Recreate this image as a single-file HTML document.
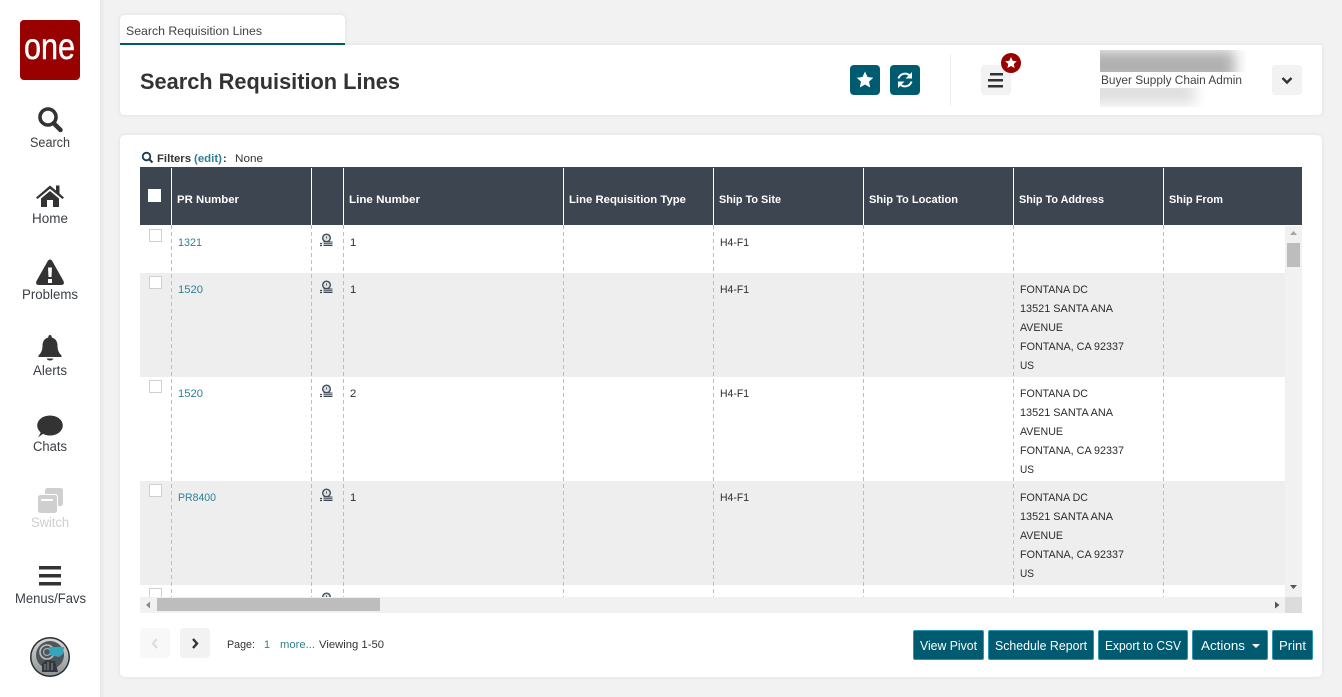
<!DOCTYPE html>
<html><head><meta charset="utf-8"><title>Search Requisition Lines</title>
<style>
html,body{margin:0;padding:0;width:1342px;height:697px;overflow:hidden;background:#f2f2f2}
svg{display:block}
text{font-family:"Liberation Sans",sans-serif;font-size:11px;fill:#333}
.n{font-size:13.5px;fill:#3a3f45;text-anchor:start}
.h{font-size:11px;font-weight:bold;fill:#fff}
.c{font-size:11.3px;fill:#2c2c2c}
.l{font-size:11.3px;fill:#2f7f94}
.b{font-size:12.8px;fill:#fff}
</style></head><body>
<svg width="1342" height="697" viewBox="0 0 1342 697" xmlns="http://www.w3.org/2000/svg">
<defs>
<linearGradient id="sg" x1="0" x2="1" y1="0" y2="0"><stop offset="0" stop-color="#e6e6e6"/><stop offset="1" stop-color="#f2f2f2"/></linearGradient>
<linearGradient id="av" x1="0" x2="0" y1="0" y2="1"><stop offset="0" stop-color="#d4d7d8"/><stop offset="1" stop-color="#8f9496"/></linearGradient>
<filter id="sh" x="-2%" y="-10%" width="104%" height="120%"><feDropShadow dx="0" dy="0" stdDeviation="2" flood-color="#000" flood-opacity=".09"/></filter>
<filter id="bl" x="-30%" y="-100%" width="160%" height="300%"><feGaussianBlur stdDeviation="7"/></filter>
<clipPath id="blur1"><rect x="1100" y="50" width="146" height="22"/></clipPath>
<clipPath id="blur2"><rect x="1100" y="88" width="146" height="19"/></clipPath>
<clipPath id="grid"><rect x="140" y="225" width="1162" height="372"/></clipPath>
<g id="ic"><circle cx="6.500" cy="5" r="3.800" fill="#dfe3e6" stroke="#4a5560" stroke-width="1.500"/><path d="M6.500 3.500V5.500" stroke="#4a5560"/><path d="M3.500 9h9M3.500 10.800h9M3.500 12.500h9" stroke="#3c4550" stroke-width="1.100"/><path d="M0 10.500h2M0 12.500h2" stroke="#3c4550" stroke-width="1.300"/></g>
</defs>

<rect width="1342" height="697" fill="#f2f2f2"/>
<rect x="100" width="5" height="697" fill="url(#sg)"/>
<rect width="100" height="697" fill="#fff"/>

<!-- logo -->
<rect x="20" y="20" width="60" height="60" rx="4" fill="#990000"/>
<text x="24" y="59" textLength="51" lengthAdjust="spacingAndGlyphs" style="font-size:37px;fill:#fff;stroke:#fff;stroke-width:.5">one</text>

<!-- Search -->
<circle cx="48" cy="117" r="8" fill="none" stroke="#333" stroke-width="3.600"/>
<path d="M54 123.500L60.500 130" stroke="#333" stroke-width="4.500" stroke-linecap="round"/>
<text class="n" x="30" y="147" textLength="40" lengthAdjust="spacingAndGlyphs">Search</text>

<!-- Home -->
<path d="M36 197.500L50 185.500L56 190.500V185.500H59.500V193.500L64 197.500L62.500 199L50 188.800L37.500 199Z" fill="#333"/>
<path d="M41 198.500L50 191L59 198.500V207H53V200H47V207H41Z" fill="#333"/>
<text class="n" x="32" y="223" textLength="36" lengthAdjust="spacingAndGlyphs">Home</text>

<!-- Problems -->
<path d="M50 259.500Q51.500 259.500 52.500 261.500L63.500 281Q65 285 61 285H39Q35 285 36.500 281L47.500 261.500Q48.500 259.500 50 259.500Z" fill="#333"/>
<path d="M48 267.500H52L51.500 277H48.500ZM48 279H52V283H48Z" fill="#fff"/>
<text class="n" x="22" y="299" textLength="56" lengthAdjust="spacingAndGlyphs">Problems</text>

<!-- Alerts -->
<path d="M50 335Q51.700 335 51.700 337.500Q57.500 339 57.500 346Q57.500 352 61.500 355.500V357H38.500V355.500Q42.500 352 42.500 346Q42.500 339 48.300 337.500Q48.300 335 50 335Z" fill="#333"/>
<path d="M46.500 358.500H53.500Q52.500 360.500 50 360.500Q47.500 360.500 46.500 358.500Z" fill="#333"/>
<text class="n" x="33" y="375" textLength="34" lengthAdjust="spacingAndGlyphs">Alerts</text>

<!-- Chats -->
<ellipse cx="50" cy="425.500" rx="12.800" ry="10" fill="#333"/>
<path d="M44 433L38 437.500Q41 433 41 430Z" fill="#333"/>
<text class="n" x="33" y="451" textLength="34" lengthAdjust="spacingAndGlyphs">Chats</text>

<!-- Switch -->
<rect x="45" y="488" width="18" height="18" rx="2.500" fill="#cfcfcf"/>
<rect x="37" y="494" width="21" height="20" rx="3" fill="#fff"/>
<rect x="38" y="495" width="19" height="18" rx="2.500" fill="#cfcfcf"/>
<rect x="41" y="499" width="12" height="2" fill="#fff"/>
<text class="n" x="31" y="527" textLength="38" lengthAdjust="spacingAndGlyphs" style="fill:#cfcfcf">Switch</text>

<!-- Menus -->
<path d="M39 566h22v3.500h-22zM39 574h22v3.500h-22zM39 582h22v3.500h-22z" fill="#333"/>
<text class="n" x="15" y="603" textLength="71" lengthAdjust="spacingAndGlyphs">Menus/Favs</text>

<!-- Avatar -->
<circle cx="50" cy="657" r="20" fill="#2a2d30"/>
<circle cx="50" cy="657" r="18.500" fill="url(#av)"/>
<circle cx="50" cy="655" r="14" fill="#4f555a"/>
<path d="M42 672V664L46 660L55 661L58 672Z" fill="#33383c"/>
<path d="M45 670V664M48 670V662M52 670V663" stroke="#8f9496"/>
<circle cx="47" cy="652" r="7" fill="none" stroke="#b9bec0" stroke-width="1.600"/>
<circle cx="47" cy="652" r="3.500" fill="none" stroke="#a5abad" stroke-width="1.200"/>
<path d="M49 647H64L63 654L59 657L50 655Z" fill="#35a5bb"/>

<!-- tab -->
<g filter="url(#sh)">
<path d="M120 45V20Q120 15 125 15H340Q345 15 345 20V45Z" fill="#fff"/>
<path d="M120 115V45H1322V110Q1322 115 1317 115H125Q120 115 120 110Z" fill="#fff"/>
</g>
<rect x="120" y="43" width="225" height="2" fill="#005a70"/>
<text x="126" y="35" textLength="136" lengthAdjust="spacingAndGlyphs" style="font-size:12.300px;fill:#3f444a">Search Requisition Lines</text>
<text x="140" y="89" textLength="260" lengthAdjust="spacingAndGlyphs" style="font-size:22.500px;font-weight:bold;fill:#333">Search Requisition Lines</text>

<!-- header actions -->
<rect x="850" y="65" width="30" height="30" rx="4" fill="#005a70"/>
<path d="M865 71.500L867.500 77L873.300 77.700L869 81.600L870.200 87.500L865 84.500L859.800 87.500L861 81.600L856.700 77.700L862.500 77Z" fill="#fff"/>
<rect x="890" y="65" width="30" height="30" rx="4" fill="#005a70"/>
<path d="M898.500 78.500A6.800 6.800 0 0 1 910 75.800M911.500 81.500A6.800 6.800 0 0 1 900 84.200" fill="none" stroke="#fff" stroke-width="2"/>
<path d="M912 72V78.500H905.500ZM898 88V81.500H904.500Z" fill="#fff"/>
<rect x="950" y="55" width="1" height="50" fill="#ececec"/>
<rect x="981" y="65" width="30" height="30" rx="4" fill="#f2f2f2"/>
<path d="M990 73h13v2.500h-13zM988 79h15v2.500h-15zM988 85h15v2.500h-15z" fill="#333"/>
<circle cx="1011" cy="63" r="10" fill="#990000"/>
<path d="M1011 57L1012.700 60.800L1016.800 61.300L1013.800 64L1014.600 68L1011 66L1007.400 68L1008.200 64L1005.200 61.300L1009.300 60.800Z" fill="#fff"/>

<!-- blurred name -->
<g clip-path="url(#blur1)"><rect x="1085" y="50" width="150" height="32" fill="#b0b0b0" filter="url(#bl)"/></g>
<g clip-path="url(#blur2)"><rect x="1085" y="80" width="110" height="24" fill="#dedede" filter="url(#bl)"/></g>
<text x="1101" y="84" textLength="141" lengthAdjust="spacingAndGlyphs" style="font-size:12.300px;fill:#3f444a">Buyer Supply Chain Admin</text>
<rect x="1272" y="65" width="30" height="30" rx="4" fill="#f2f2f2"/>
<path d="M1282.500 78L1287 82.500L1291.500 78" fill="none" stroke="#333" stroke-width="2.400"/>

<!-- main card -->
<rect x="120" y="135" width="1202" height="542" rx="5" fill="#fff" filter="url(#sh)"/>

<!-- filters -->
<circle cx="146.500" cy="156.500" r="3.800" fill="none" stroke="#1f3a4d" stroke-width="1.800"/>
<path d="M149.500 159.500L152.500 162.500" stroke="#1f3a4d" stroke-width="2"/>
<text x="157" y="162" textLength="34" lengthAdjust="spacingAndGlyphs" style="font-weight:bold;fill:#333">Filters</text>
<text x="194" y="162" textLength="28" lengthAdjust="spacingAndGlyphs" style="font-weight:bold;fill:#2f7f94">(edit)</text>
<text x="223" y="162" style="font-weight:bold;fill:#333">:</text>
<text x="235" y="162" textLength="28" lengthAdjust="spacingAndGlyphs" style="fill:#333">None</text>

<!-- table head -->
<rect x="140" y="167" width="1162" height="58" fill="#3c4550"/>
<path d="M171.500 168V225M311.500 168V225M343.500 168V225M563.500 168V225M713.500 168V225M863.500 168V225M1013.500 168V225M1163.500 168V225" stroke="#fff"/>
<rect x="148" y="189" width="13" height="13" fill="#fff"/>
<text class="h" x="177" y="203" textLength="62" lengthAdjust="spacingAndGlyphs">PR Number</text>
<text class="h" x="349" y="203" textLength="71" lengthAdjust="spacingAndGlyphs">Line Number</text>
<text class="h" x="569" y="203" textLength="117" lengthAdjust="spacingAndGlyphs">Line Requisition Type</text>
<text class="h" x="719" y="203" textLength="62" lengthAdjust="spacingAndGlyphs">Ship To Site</text>
<text class="h" x="869" y="203" textLength="89" lengthAdjust="spacingAndGlyphs">Ship To Location</text>
<text class="h" x="1019" y="203" textLength="85" lengthAdjust="spacingAndGlyphs">Ship To Address</text>
<text class="h" x="1169" y="203" textLength="54" lengthAdjust="spacingAndGlyphs">Ship From</text>

<!-- rows -->
<rect x="140" y="273" width="1146" height="104" fill="#eeeeee"/>
<rect x="140" y="481" width="1146" height="104" fill="#eeeeee"/>
<path d="M171.500 225V597M311.500 225V597M343.500 225V597M563.500 225V597M713.500 225V597M863.500 225V597M1013.500 225V597M1163.500 225V597" stroke="#bdbdbd" stroke-dasharray="4 3"/>
<g fill="#fff" stroke="#d0d0d0">
<rect x="149.500" y="229.500" width="12" height="12"/>
<rect x="149.500" y="276.500" width="12" height="12"/>
<rect x="149.500" y="380.500" width="12" height="12"/>
<rect x="149.500" y="484.500" width="12" height="12"/>
<rect x="149.500" y="588.500" width="12" height="12"/>
</g>
<g clip-path="url(#grid)">
<use href="#ic" x="320" y="233"/><use href="#ic" x="320" y="280"/><use href="#ic" x="320" y="384"/><use href="#ic" x="320" y="488"/><use href="#ic" x="320" y="592"/>
</g>

<text class="l" x="178" y="246" textLength="24" lengthAdjust="spacingAndGlyphs">1321</text>
<text class="c" x="350" y="246">1</text>
<text class="c" x="720" y="246" textLength="29" lengthAdjust="spacingAndGlyphs">H4-F1</text>

<text class="l" x="178" y="293" textLength="25" lengthAdjust="spacingAndGlyphs">1520</text>
<text class="c" x="350" y="293">1</text>
<text class="c" x="720" y="293" textLength="29" lengthAdjust="spacingAndGlyphs">H4-F1</text>
<text class="c" x="1020" y="293" textLength="68" lengthAdjust="spacingAndGlyphs">FONTANA DC</text>
<text class="c" x="1020" y="312" textLength="93" lengthAdjust="spacingAndGlyphs">13521 SANTA ANA</text>
<text class="c" x="1020" y="331" textLength="43" lengthAdjust="spacingAndGlyphs">AVENUE</text>
<text class="c" x="1020" y="350" textLength="104" lengthAdjust="spacingAndGlyphs">FONTANA, CA 92337</text>
<text class="c" x="1020" y="369" textLength="14" lengthAdjust="spacingAndGlyphs">US</text>

<text class="l" x="178" y="397" textLength="25" lengthAdjust="spacingAndGlyphs">1520</text>
<text class="c" x="350" y="397">2</text>
<text class="c" x="720" y="397" textLength="29" lengthAdjust="spacingAndGlyphs">H4-F1</text>
<text class="c" x="1020" y="397" textLength="68" lengthAdjust="spacingAndGlyphs">FONTANA DC</text>
<text class="c" x="1020" y="416" textLength="93" lengthAdjust="spacingAndGlyphs">13521 SANTA ANA</text>
<text class="c" x="1020" y="435" textLength="43" lengthAdjust="spacingAndGlyphs">AVENUE</text>
<text class="c" x="1020" y="454" textLength="104" lengthAdjust="spacingAndGlyphs">FONTANA, CA 92337</text>
<text class="c" x="1020" y="473" textLength="14" lengthAdjust="spacingAndGlyphs">US</text>

<text class="l" x="178" y="501" textLength="38" lengthAdjust="spacingAndGlyphs">PR8400</text>
<text class="c" x="350" y="501">1</text>
<text class="c" x="720" y="501" textLength="29" lengthAdjust="spacingAndGlyphs">H4-F1</text>
<text class="c" x="1020" y="501" textLength="68" lengthAdjust="spacingAndGlyphs">FONTANA DC</text>
<text class="c" x="1020" y="520" textLength="93" lengthAdjust="spacingAndGlyphs">13521 SANTA ANA</text>
<text class="c" x="1020" y="539" textLength="43" lengthAdjust="spacingAndGlyphs">AVENUE</text>
<text class="c" x="1020" y="558" textLength="104" lengthAdjust="spacingAndGlyphs">FONTANA, CA 92337</text>
<text class="c" x="1020" y="577" textLength="14" lengthAdjust="spacingAndGlyphs">US</text>

<!-- scrollbars -->
<rect x="1285" y="226" width="17" height="371" fill="#f1f1f1"/>
<rect x="1287" y="243" width="13" height="24" fill="#bdbdbd"/>
<path d="M1293.500 231L1297 235H1290Z" fill="#a3a3a3"/>
<path d="M1290 585H1297L1293.500 589Z" fill="#555"/>
<rect x="140" y="597" width="1146" height="16" fill="#f1f1f1"/>
<rect x="157" y="598" width="223" height="13" fill="#bdbdbd"/>
<path d="M150 601.500V608.500L146 605Z" fill="#8a8a8a"/>
<path d="M1275 601.500V608.500L1279.500 605Z" fill="#555"/>
<rect x="1285" y="597" width="17" height="16" fill="#dcdcdc"/>

<!-- pagination -->
<rect x="140" y="628" width="30" height="30" rx="4" fill="#f8f8f8"/>
<path d="M157 639L153 643.500L157 648" fill="none" stroke="#dddddd" stroke-width="2.400"/>
<rect x="180" y="628" width="30" height="30" rx="4" fill="#f2f2f2"/>
<path d="M193 639L197 643.500L193 648" fill="none" stroke="#333" stroke-width="2.400"/>
<text x="227" y="648" textLength="28" lengthAdjust="spacingAndGlyphs" style="fill:#333">Page:</text>
<text x="264" y="648" textLength="6" lengthAdjust="spacingAndGlyphs" style="fill:#2f7f94">1</text>
<text x="280" y="648" textLength="35" lengthAdjust="spacingAndGlyphs" style="fill:#2f7f94">more...</text>
<text x="319" y="648" textLength="65" lengthAdjust="spacingAndGlyphs" style="fill:#333">Viewing 1-50</text>

<!-- buttons -->
<g fill="#005a70" stroke="#2797b0">
<rect x="913.500" y="630.500" width="70" height="29" rx="1.500"/>
<rect x="988.500" y="630.500" width="105" height="29" rx="1.500"/>
<rect x="1098.500" y="630.500" width="89" height="29" rx="1.500"/>
<rect x="1192.500" y="630.500" width="75" height="29" rx="1.500"/>
<rect x="1272.500" y="630.500" width="40" height="29" rx="1.500"/>
</g>
<text class="b" x="920" y="650" textLength="57" lengthAdjust="spacingAndGlyphs">View Pivot</text>
<text class="b" x="995" y="650" textLength="92" lengthAdjust="spacingAndGlyphs">Schedule Report</text>
<text class="b" x="1105" y="650" textLength="76" lengthAdjust="spacingAndGlyphs">Export to CSV</text>
<text class="b" x="1201" y="650" textLength="44" lengthAdjust="spacingAndGlyphs">Actions</text>
<path d="M1252 644H1260L1256 648Z" fill="#fff"/>
<text class="b" x="1279" y="650" textLength="27" lengthAdjust="spacingAndGlyphs">Print</text>
</svg>
</body></html>
